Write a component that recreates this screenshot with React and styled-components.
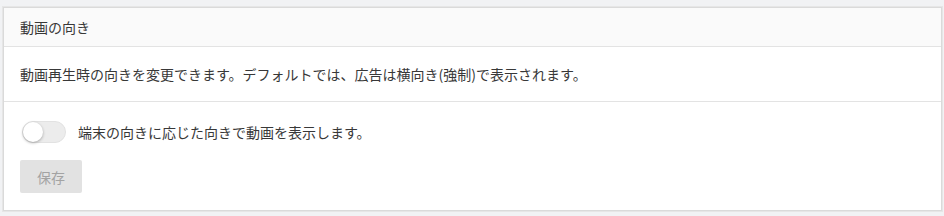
import React from "react";
import styled, { createGlobalStyle } from "styled-components";

const GlobalStyle = createGlobalStyle`
  html, body {
    margin: 0;
    padding: 0;
    background: #f1f2f4;
  }
  body {
    font-family: "Noto Sans CJK JP", "Noto Sans", sans-serif;
    color: #383838;
    font-size: 14px;
  }
`;

const Page = styled.div`
  padding: 7px 1px 5px 2px;
`;

const Card = styled.section`
  background: #fff;
  border: 1px solid #dadada;
  box-shadow: 0 0 0 1px #e6e6e6;
  margin: 0 1px;
`;

const CardHeader = styled.div`
  background: #fafafa;
  border-bottom: 1px solid #e3e3e3;
  height: 38px;
  display: flex;
  align-items: center;
  padding: 0 16px;
  font-size: 14px;
`;

const Description = styled.div`
  height: 54px;
  display: flex;
  align-items: center;
  padding: 0 16px;
  border-bottom: 1px solid #e3e3e3;
  font-size: 14px;
`;

const Body = styled.div`
  padding: 19px 16px 17px;
  display: flex;
  flex-direction: column;
  gap: 17px;
  align-items: flex-start;
`;

const ToggleRow = styled.label`
  display: flex;
  align-items: center;
  gap: 12px;
  padding-left: 2px;
`;

const Track = styled.span`
  width: 42px;
  height: 20px;
  border-radius: 11px;
  background: #ececec;
  border: 1px solid #e2e2e2;
  position: relative;
  display: inline-block;
`;

const Knob = styled.span`
  position: absolute;
  left: 0;
  top: 0;
  width: 20px;
  height: 20px;
  border-radius: 50%;
  background: #fff;
  box-shadow: 0 1px 3px rgba(0, 0, 0, 0.3);
`;

const SaveButton = styled.button`
  width: 62px;
  height: 33px;
  border: none;
  border-radius: 2px;
  background: #e2e2e2;
  color: #a3a3a3;
  font-family: inherit;
  font-size: 14px;
  cursor: not-allowed;
`;

export default function App() {
  return (
    <>
      <GlobalStyle />
      <Page>
        <Card>
          <CardHeader>動画の向き</CardHeader>
          <Description>
            動画再生時の向きを変更できます。デフォルトでは、広告は横向き(強制)で表示されます。
          </Description>
          <Body>
            <ToggleRow>
              <Track>
                <Knob />
              </Track>
              端末の向きに応じた向きで動画を表示します。
            </ToggleRow>
            <SaveButton disabled>保存</SaveButton>
          </Body>
        </Card>
      </Page>
    </>
  );
}
